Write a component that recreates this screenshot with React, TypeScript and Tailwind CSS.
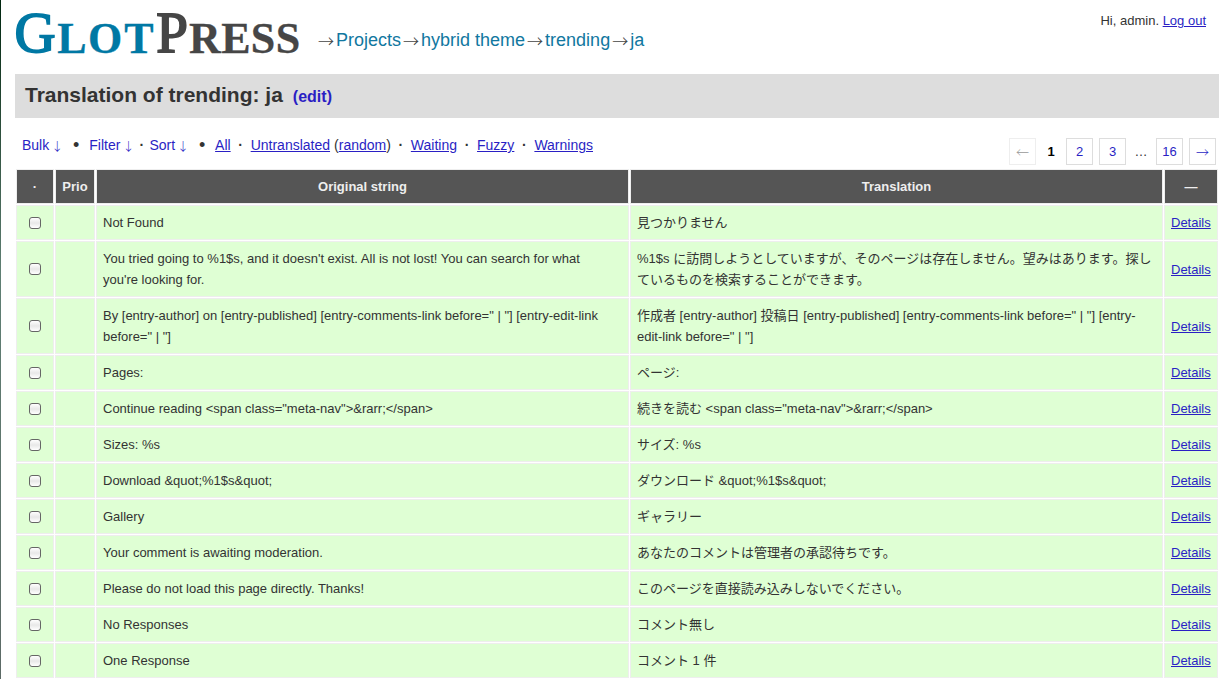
const link = "text-[#2a1fc4] underline"
const arrow = "font-['Noto_Sans_CJK_JP',sans-serif] font-light"

const crumbs = ["Projects", "hybrid theme", "trending", "ja"]

const strings = [
  { original: "Not Found", translation: "見つかりません" },
  {
    original: "You tried going to %1$s, and it doesn't exist. All is not lost! You can search for what you're looking for.",
    translation: "%1$s に訪問しようとしていますが、そのページは存在しません。望みはあります。探しているものを検索することができます。",
  },
  {
    original: 'By [entry-author] on [entry-published] [entry-comments-link before=" | "] [entry-edit-link before=" | "]',
    translation: '作成者 [entry-author] 投稿日 [entry-published] [entry-comments-link before=" | "] [entry-edit-link before=" | "]',
  },
  { original: "Pages:", translation: "ページ:" },
  {
    original: 'Continue reading <span class="meta-nav">&rarr;</span>',
    translation: '続きを読む <span class="meta-nav">&rarr;</span>',
  },
  { original: "Sizes: %s", translation: "サイズ: %s" },
  { original: "Download &quot;%1$s&quot;", translation: "ダウンロード &quot;%1$s&quot;" },
  { original: "Gallery", translation: "ギャラリー" },
  { original: "Your comment is awaiting moderation.", translation: "あなたのコメントは管理者の承認待ちです。" },
  { original: "Please do not load this page directly. Thanks!", translation: "このページを直接読み込みしないでください。" },
  { original: "No Responses", translation: "コメント無し" },
  { original: "One Response", translation: "コメント 1 件" },
]

const Logo = () => (
  <svg
    width="290"
    height="68"
    viewBox="0 0 290 68"
    role="img"
    aria-label="GlotPress"
    textAnchor="middle"
    className="font-['Liberation_Serif',serif]"
  >
    <g fill="#0078a4" stroke="#0078a4">
      <text x="20" y="52" fontSize="57" strokeWidth="1.8">G</text>
      <text x="57 90 124" y="53" fontSize="44" fontWeight="bold" strokeWidth="0.3">LOT</text>
    </g>
    <g fill="#464646" stroke="#464646">
      <text x="157" y="52" fontSize="57" strokeWidth="1.8">P</text>
      <text x="190 221 248 273" y="53" fontSize="44" fontWeight="bold" strokeWidth="0.3">RESS</text>
    </g>
  </svg>
)

const Header = () => (
  <header className="flex h-[74px] items-start justify-between">
    <div className="flex items-start">
      <a href="#">
        <Logo />
      </a>
      <nav aria-label="Breadcrumb" className="ml-[11px] flex pt-[27px] text-lg/[27px] text-[#1177a0]">
        {crumbs.map((crumb) => (
          <span key={crumb} className="flex">
            <span className={`w-5 text-center text-base/[27px] text-[#444] ${arrow}`}>→</span>
            <a href="#">{crumb}</a>
          </span>
        ))}
      </nav>
    </div>
    <p className="pt-[10px] pr-[13px] text-[13px] leading-[21px]">
      Hi, admin. <a href="#" className={link}>Log out</a>
    </p>
  </header>
)

const Toggle = ({ label }: { label: string }) => (
  <button type="button" className="flex gap-[2px] text-[#2a1fc4]">
    {label}
    <span className={`text-xs/[21px] ${arrow}`}>↓</span>
  </button>
)

const Bullet = () => <span className="w-[26px] text-center text-lg/[21px]">•</span>
const Dot = () => <span className="w-5 text-center font-bold">·</span>

const Filters = () => (
  <div className="flex items-center pl-[7px] text-sm/[21px]">
    <Toggle label="Bulk" />
    <Bullet />
    <Toggle label="Filter" />
    <span className="w-[15px] text-center font-bold">·</span>
    <Toggle label="Sort" />
    <Bullet />
    <a href="#" className={link}>All</a>
    <Dot />
    <a href="#" className={link}>Untranslated</a>
    <span className="pl-1">
      (<a href="#" className={link}>random</a>)
    </span>
    <Dot />
    <a href="#" className={link}>Waiting</a>
    <Dot />
    <a href="#" className={link}>Fuzzy</a>
    <Dot />
    <a href="#" className={link}>Warnings</a>
  </div>
)

const pageBox = "flex size-[27px] items-center justify-center border border-[#ddd] text-[#2a1fc4]"

const Pagination = () => (
  <nav aria-label="Pages" className="mr-[3px] flex items-center gap-[6px] text-[13px]">
    <span className={`flex size-[27px] items-center justify-center border border-[#eee] text-[#999] ${arrow}`}>←</span>
    <span className="w-[18px] text-center font-bold text-black">1</span>
    <a href="#" className={pageBox}>2</a>
    <a href="#" className={pageBox}>3</a>
    <span className="w-[18px] text-center">…</span>
    <a href="#" className={pageBox}>16</a>
    <a href="#" className={`${pageBox} ${arrow}`}>→</a>
  </nav>
)

const th = "border border-[#eee] bg-[#555] py-[6px] font-bold text-[#eee]"
const td = "border border-[#eee] bg-[#dfffd4] py-[6px] pl-[6px]"

const StringsTable = () => (
  <table className="w-full table-fixed border-separate border-spacing-px text-[13px] leading-[21px]">
    <colgroup>
      <col className="w-[38px]" />
      <col className="w-[40px]" />
      <col />
      <col />
      <col className="w-[54px]" />
    </colgroup>
    <thead>
      <tr>
        <th className={th}>·</th>
        <th className={th}>Prio</th>
        <th className={th}>Original string</th>
        <th className={th}>Translation</th>
        <th className={th}>—</th>
      </tr>
    </thead>
    <tbody>
      {strings.map((s) => (
        <tr key={s.original}>
          <td className={`${td} pr-[6px]`}>
            <input
              type="checkbox"
              aria-label={s.original}
              className="mx-auto block size-3 appearance-none rounded-[3px] border border-[#666] bg-linear-to-b from-white via-[#e8e8e8] to-white checked:bg-[#555]"
            />
          </td>
          <td className={`${td} pr-[6px]`}></td>
          <td className={`${td} pr-3`}>{s.original}</td>
          <td className={`${td} pr-[6px]`} lang="ja">{s.translation}</td>
          <td className={`${td} pr-[6px]`}>
            <a href="#" className={link}>Details</a>
          </td>
        </tr>
      ))}
    </tbody>
  </table>
)

export default function App() {
  return (
    <div className="bg-linear-to-b from-[#00260f] via-[#5f7f73] via-40% to-[#5c6a66] pl-px font-['Liberation_Sans','Noto_Sans_CJK_JP',sans-serif] text-[#333]">
      <div className="min-h-screen bg-white pr-[6px] pl-[14px]">
        <Header />
        <h1 className="flex h-11 items-baseline gap-[10px] bg-[#ddd] px-[10px] text-[21px]/[42px] font-bold">
          Translation of trending: ja
          <a href="#" className="text-base/[42px] text-[#2a1fc4]">(edit)</a>
        </h1>
        <div className="flex h-[50px] items-start justify-between">
          <div className="pt-[17px]">
            <Filters />
          </div>
          <div className="pt-5">
            <Pagination />
          </div>
        </div>
        <StringsTable />
      </div>
    </div>
  )
}
